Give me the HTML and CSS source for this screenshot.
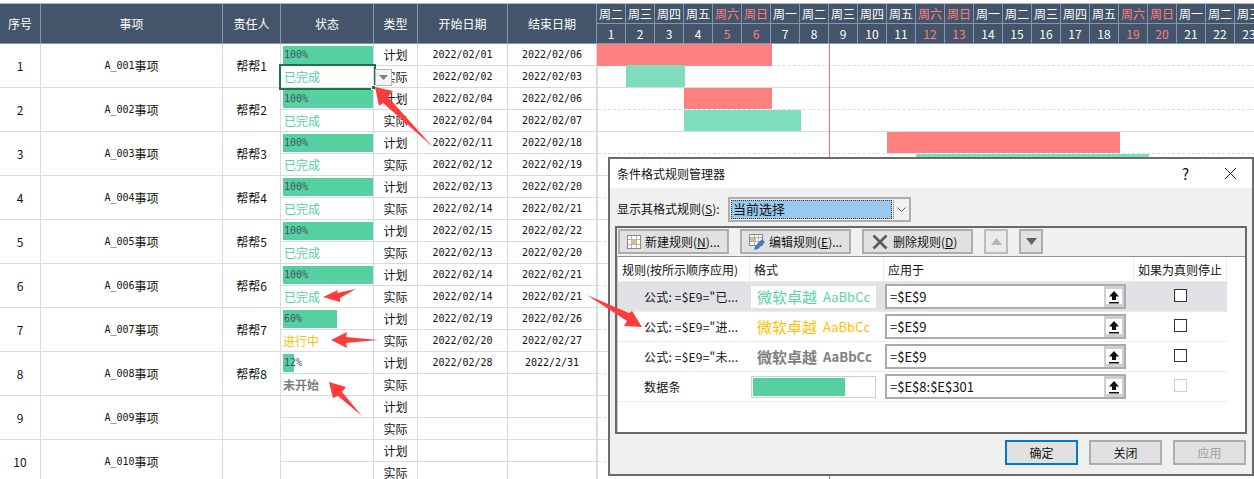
FILE: index.html
```html
<!DOCTYPE html>
<html lang="zh-CN">
<head>
<meta charset="utf-8">
<title>条件格式规则管理器</title>
<link rel="stylesheet" href="styles.css">
</head>
<body>
<div class="page">
  <div class="sheet">
    <div class="table">
      <div class="th">序号</div><div class="th">事项</div><div class="th">责任人</div><div class="th">状态</div><div class="th">类型</div><div class="th">开始日期</div><div class="th">结束日期</div>

      <div class="td tall">1</div><div class="td tall"><span class="lat">A_001</span>事项</div><div class="td tall">帮帮1</div>
      <div class="td st"><div class="bar full"><span class="lat">100%</span></div></div><div class="td">计划</div><div class="td lat">2022/02/01</div><div class="td lat">2022/02/06</div>
      <div class="td st done sel">已完成<span class="drop"><svg width="9" height="5" viewBox="0 0 9 5"><path d="M0 0h9L4.500 5z" fill="#7f7f7f"/></svg></span><span class="handle"></span></div><div class="td">实际</div><div class="td lat">2022/02/02</div><div class="td lat">2022/02/03</div>

      <div class="td tall">2</div><div class="td tall"><span class="lat">A_002</span>事项</div><div class="td tall">帮帮2</div>
      <div class="td st"><div class="bar full"><span class="lat">100%</span></div></div><div class="td">计划</div><div class="td lat">2022/02/04</div><div class="td lat">2022/02/06</div>
      <div class="td st done">已完成</div><div class="td">实际</div><div class="td lat">2022/02/04</div><div class="td lat">2022/02/07</div>

      <div class="td tall">3</div><div class="td tall"><span class="lat">A_003</span>事项</div><div class="td tall">帮帮3</div>
      <div class="td st"><div class="bar full"><span class="lat">100%</span></div></div><div class="td">计划</div><div class="td lat">2022/02/11</div><div class="td lat">2022/02/18</div>
      <div class="td st done">已完成</div><div class="td">实际</div><div class="td lat">2022/02/12</div><div class="td lat">2022/02/19</div>

      <div class="td tall">4</div><div class="td tall"><span class="lat">A_004</span>事项</div><div class="td tall">帮帮4</div>
      <div class="td st"><div class="bar full"><span class="lat">100%</span></div></div><div class="td">计划</div><div class="td lat">2022/02/13</div><div class="td lat">2022/02/20</div>
      <div class="td st done">已完成</div><div class="td">实际</div><div class="td lat">2022/02/14</div><div class="td lat">2022/02/21</div>

      <div class="td tall">5</div><div class="td tall"><span class="lat">A_005</span>事项</div><div class="td tall">帮帮5</div>
      <div class="td st"><div class="bar full"><span class="lat">100%</span></div></div><div class="td">计划</div><div class="td lat">2022/02/15</div><div class="td lat">2022/02/22</div>
      <div class="td st done">已完成</div><div class="td">实际</div><div class="td lat">2022/02/13</div><div class="td lat">2022/02/20</div>

      <div class="td tall">6</div><div class="td tall"><span class="lat">A_006</span>事项</div><div class="td tall">帮帮6</div>
      <div class="td st"><div class="bar full"><span class="lat">100%</span></div></div><div class="td">计划</div><div class="td lat">2022/02/14</div><div class="td lat">2022/02/21</div>
      <div class="td st done">已完成</div><div class="td">实际</div><div class="td lat">2022/02/14</div><div class="td lat">2022/02/21</div>

      <div class="td tall">7</div><div class="td tall"><span class="lat">A_007</span>事项</div><div class="td tall">帮帮7</div>
      <div class="td st"><div class="bar" style="width:54px"><span class="lat">60%</span></div></div><div class="td">计划</div><div class="td lat">2022/02/19</div><div class="td lat">2022/02/26</div>
      <div class="td st doing">进行中</div><div class="td">实际</div><div class="td lat">2022/02/20</div><div class="td lat">2022/02/27</div>

      <div class="td tall">8</div><div class="td tall"><span class="lat">A_008</span>事项</div><div class="td tall">帮帮8</div>
      <div class="td st"><div class="bar" style="width:11px"><span class="lat">12%</span></div></div><div class="td">计划</div><div class="td lat">2022/02/28</div><div class="td lat">2022/2/31</div>
      <div class="td st todo">未开始</div><div class="td">实际</div><div class="td"></div><div class="td"></div>

      <div class="td tall">9</div><div class="td tall"><span class="lat">A_009</span>事项</div><div class="td tall"></div>
      <div class="td st"></div><div class="td">计划</div><div class="td"></div><div class="td"></div>
      <div class="td st"></div><div class="td">实际</div><div class="td"></div><div class="td"></div>

      <div class="td tall">10</div><div class="td tall"><span class="lat">A_010</span>事项</div><div class="td tall"></div>
      <div class="td st"></div><div class="td">计划</div><div class="td"></div><div class="td"></div>
      <div class="td st"></div><div class="td">实际</div><div class="td"></div><div class="td"></div>
    </div>

    <div class="gantt">
      <div class="ghead">
        <div class="wk">周二</div><div class="wk">周三</div><div class="wk">周四</div><div class="wk">周五</div><div class="wk off">周六</div><div class="wk off">周日</div><div class="wk">周一</div><div class="wk">周二</div><div class="wk">周三</div><div class="wk">周四</div><div class="wk">周五</div><div class="wk off">周六</div><div class="wk off">周日</div><div class="wk">周一</div><div class="wk">周二</div><div class="wk">周三</div><div class="wk">周四</div><div class="wk">周五</div><div class="wk off">周六</div><div class="wk off">周日</div><div class="wk">周一</div><div class="wk">周二</div><div class="wk">周三</div>
        <div class="dy">1</div><div class="dy">2</div><div class="dy">3</div><div class="dy">4</div><div class="dy off">5</div><div class="dy off">6</div><div class="dy">7</div><div class="dy">8</div><div class="dy">9</div><div class="dy">10</div><div class="dy">11</div><div class="dy off">12</div><div class="dy off">13</div><div class="dy">14</div><div class="dy">15</div><div class="dy">16</div><div class="dy">17</div><div class="dy">18</div><div class="dy off">19</div><div class="dy off">20</div><div class="dy">21</div><div class="dy">22</div><div class="dy">23</div>
      </div>
      <div class="gbody">
        <div class="gr dash r1"></div><div class="gr r2"></div><div class="gr dash r3"></div><div class="gr r4"></div><div class="gr dash r5"></div><div class="gr r6"></div><div class="gr dash r7"></div><div class="gr r8"></div><div class="gr dash r9"></div><div class="gr r10"></div><div class="gr dash r11"></div><div class="gr r12"></div><div class="gr dash r13"></div><div class="gr r14"></div><div class="gr dash r15"></div><div class="gr r16"></div><div class="gr dash r17"></div><div class="gr r18"></div><div class="gr dash r19"></div><div class="gr r20"></div>
        <div class="today"></div>
        <div class="gbar plan flush" style="grid-area:1/1/2/7"></div>
        <div class="gbar real over" style="grid-area:2/2/3/4"></div>
        <div class="gbar plan" style="grid-area:3/4/4/7"></div>
        <div class="gbar real" style="grid-area:4/4/5/8"></div>
        <div class="gbar plan" style="grid-area:5/11/6/19"></div>
        <div class="gbar real" style="grid-area:6/12/7/20"></div>
      </div>
    </div>
  </div>

  <div class="dialog">
    <div class="dtitle">
      <span class="dname">条件格式规则管理器</span>
      <span class="dhelp">?</span>
      <svg class="dclose" width="13" height="13" viewBox="0 0 13 13"><path d="M1 1l11 11M12 1L1 12" stroke="#222" stroke-width="1" fill="none"/></svg>
    </div>
    <div class="filter">
      <span class="flabel">显示其格式规则(<u>S</u>):</span>
      <div class="select">
        <span class="selval">当前选择</span>
        <span class="selbtn"><svg width="9" height="5" viewBox="0 0 9 5"><path d="M.5.500l4 4 4-4" stroke="#555" fill="none"/></svg></span>
      </div>
    </div>
    <div class="rulebox">
      <div class="tools">
        <div class="tbtn"><svg width="16" height="16" viewBox="0 0 16 16"><rect x="1.500" y="1.500" width="13" height="13" fill="#fff" stroke="#8a8a8a"/><rect x="5" y="5" width="6" height="6" fill="#e8b778"/><path d="M5.500 2v12M10.500 2v12M2 5.500h12M2 10.500h12" stroke="#b5b5b5" fill="none"/></svg><span>新建规则(<u>N</u>)...</span></div>
        <div class="tbtn"><svg width="18" height="18" viewBox="0 0 18 18"><rect x="1.500" y="1.500" width="13" height="11" fill="#fff" stroke="#8a8a8a"/><rect x="2" y="5" width="6" height="4" fill="#e8b778"/><path d="M6.500 2v10M10.500 2v10M2 4.500h12M2 8.500h12" stroke="#b5b5b5" fill="none"/><path d="M6 17l1-4 7-7 3 3-7 7z" fill="#3f7fc0"/></svg><span>编辑规则(<u>E</u>)...</span></div>
        <div class="tbtn del"><svg width="16" height="16" viewBox="0 0 16 16"><path d="M1.500 1.500l13 13M14.500 1.500l-13 13" stroke="#5a5a5a" stroke-width="2.600" fill="none"/></svg><span>删除规则(<u>D</u>)</span></div>
        <div class="tbtn arrow off"><svg width="11" height="7" viewBox="0 0 11 7"><path d="M0 7h11L5.500 0z" fill="#b4b4b4"/></svg></div>
        <div class="tbtn arrow"><svg width="11" height="7" viewBox="0 0 11 7"><path d="M0 0h11L5.500 7z" fill="#606060"/></svg></div>
      </div>
      <div class="list">
        <div class="rhead"><span>规则(按所示顺序应用)</span><span>格式</span><span>应用于</span><span>如果为真则停止</span></div>

        <div class="rule cur">
          <span class="rname">公式: =$E9="已...</span>
          <span class="fmt green"><b>微软卓越</b><i>AaBbCc</i></span>
          <span class="range"><span class="rtext">=$E$9</span><span class="rbtn"><svg width="12" height="14" viewBox="0 0 12 14"><path d="M6 1L1 6.500h3V10h4V6.500h3zM1 12h10v1.500H1z" fill="#111"/></svg></span></span>
          <span class="chk"><span class="box"></span></span>
        </div>
        <div class="rule">
          <span class="rname">公式: =$E9="进...</span>
          <span class="fmt yellow"><b>微软卓越</b><i>AaBbCc</i></span>
          <span class="range"><span class="rtext">=$E$9</span><span class="rbtn"><svg width="12" height="14" viewBox="0 0 12 14"><path d="M6 1L1 6.500h3V10h4V6.500h3zM1 12h10v1.500H1z" fill="#111"/></svg></span></span>
          <span class="chk"><span class="box"></span></span>
        </div>
        <div class="rule">
          <span class="rname">公式: =$E9="未...</span>
          <span class="fmt gray"><b>微软卓越</b><i>AaBbCc</i></span>
          <span class="range"><span class="rtext">=$E$9</span><span class="rbtn"><svg width="12" height="14" viewBox="0 0 12 14"><path d="M6 1L1 6.500h3V10h4V6.500h3zM1 12h10v1.500H1z" fill="#111"/></svg></span></span>
          <span class="chk"><span class="box"></span></span>
        </div>
        <div class="rule">
          <span class="rname">数据条</span>
          <span class="fmt databar"><span class="dfill"></span></span>
          <span class="range"><span class="rtext">=$E$8:$E$301</span><span class="rbtn"><svg width="12" height="14" viewBox="0 0 12 14"><path d="M6 1L1 6.500h3V10h4V6.500h3zM1 12h10v1.500H1z" fill="#111"/></svg></span></span>
          <span class="chk"><span class="box dim"></span></span>
        </div>
      </div>
    </div>
    <div class="foot">
      <div class="fbtn primary">确定</div>
      <div class="fbtn">关闭</div>
      <div class="fbtn dis">应用</div>
    </div>
  </div>

  <svg class="marks" width="1254" height="479" viewBox="0 0 1254 479">
    <g fill="#ff3b3b">
      <polygon points="375,87 393,91 388,97 433,147 383,103 379,106"/>
      <polygon points="323,297 338,290 337,293 356,289 340,298 340,302"/>
      <polygon points="331,340 347,332 346,337 378,340 346,343 347,348"/>
      <polygon points="329,382 346,387 342,392 362,416 338,396 333,398"/>
      <polygon points="587,295 629,313 632,311 642,327 624,326 627,321"/>
    </g>
  </svg>
</div>
</body>
</html>
```
FILE: styles.css
```css
* { box-sizing: border-box; }
html, body { margin: 0; padding: 0; background: #fff; }
body {
  font-family: "Noto Sans CJK SC", "Liberation Sans", sans-serif;
  font-size: 12px;
  color: #111;
}
.page { position: relative; width: 1254px; height: 479px; overflow: hidden; }
.sheet { display: flex; padding-top: 3px; height: 479px; }

/* left table */
.table {
  display: grid;
  grid-template-columns: 41px 182px 58px 93px 44px 90px 89px;
  grid-template-rows: 41px;
  grid-auto-rows: 22px;
  width: 597px;
  flex: none;
  align-content: start;
}
.th {
  display: flex; align-items: center; justify-content: center;
  background: #44546a; color: #fff;
  border-top: 1px solid #adb9ca;
  border-right: 1px solid #8497b0;
  border-bottom: 1px solid #8497b0;
}
.td {
  display: flex; align-items: center; justify-content: center;
  border-right: 1px solid #d6dce4;
  border-bottom: 1px solid #d6dce4;
  white-space: nowrap;
  line-height: 1;
}
.tall { grid-row: span 2; }
.lat { font-family: "DejaVu Sans Mono", "Liberation Mono", monospace; font-size: 10px; }
.st { justify-content: flex-start; padding-left: 2px; position: relative; }
.bar {
  height: 18px; background: #55d0a0; color: #44546a;
  display: flex; align-items: center; padding-left: 1px;
  white-space: nowrap;
}
.bar.full { width: 90px; }
.done { color: #55d0a0; padding-left: 3px; }
.doing { color: #ffc000; padding-left: 2px; }
.todo { color: #7f7f7f; font-weight: 700; padding-left: 2px; }
.sel { outline: 2px solid #217346; z-index: 2; background: #fff; }
.drop {
  position: absolute; left: 94px; top: 3px;
  width: 17px; height: 17px;
  background: #f4f4f6; border: 1px solid #b3b8c4;
  display: flex; align-items: center; justify-content: center;
}
.handle { position: absolute; right: -3px; bottom: -3px; width: 5px; height: 5px; background: #217346; border: 1px solid #fff; }

/* gantt */
.gantt { flex: 1; min-width: 0; overflow: hidden; }
.ghead {
  display: grid;
  grid-template-columns: repeat(23, 29px);
  grid-template-rows: 20px 21px;
  background: #44546a;
  width: 667px;
}
.wk, .dy {
  display: flex; align-items: center; justify-content: center;
  color: #fff; white-space: nowrap;
  border-right: 1px solid #8497b0;
}
.wk { border-top: 1px solid #adb9ca; }
.dy { border-top: 1px solid #8497b0; border-bottom: 1px solid #8497b0; }
.off { color: #ff8080; }
.gbody {
  display: grid;
  grid-template-columns: repeat(23, 29px);
  grid-template-rows: repeat(20, 22px);
  width: 667px;
  border-left: 1px solid #d6dce4;
}
.gr { grid-column: 1 / -1; border-bottom: 1px solid #d6dce4; }
.gr.dash { border-bottom: 1px dashed #d6dce4; }
.r1 { grid-row: 1; } .r2 { grid-row: 2; } .r3 { grid-row: 3; } .r4 { grid-row: 4; } .r5 { grid-row: 5; }
.r6 { grid-row: 6; } .r7 { grid-row: 7; } .r8 { grid-row: 8; } .r9 { grid-row: 9; } .r10 { grid-row: 10; }
.r11 { grid-row: 11; } .r12 { grid-row: 12; } .r13 { grid-row: 13; } .r14 { grid-row: 14; } .r15 { grid-row: 15; }
.r16 { grid-row: 16; } .r17 { grid-row: 17; } .r18 { grid-row: 18; } .r19 { grid-row: 19; } .r20 { grid-row: 20; }
.today { grid-column: 9; grid-row: 1 / -1; border-left: 1px solid #ff6b6b; margin-left: -1px; z-index: 1; }
.gbar { z-index: 2; margin-left: -1px; margin-bottom: 1px; }
.gbar.flush { margin-bottom: 0; }
.gbar.over { margin-top: -1px; }
.plan { background: #ff8080; }
.real { background: #80ddbc; }

/* dialog */
.dialog {
  position: absolute; left: 608px; top: 157px;
  width: 646px; height: 319px;
  border: 2px solid #6b6b6b;
  background: #f0f0f0;
  display: flex; flex-direction: column;
  z-index: 5;
}
.dtitle {
  height: 29px; flex: none; background: #fff;
  display: flex; align-items: center; padding-left: 7px;
}
.dname { flex: 1; }
.dhelp { font-size: 15px; margin-right: 35px; }
.dclose { margin-right: 15px; }
.filter { display: flex; align-items: center; margin-top: 9px; padding-left: 7px; height: 25px; flex: none; }
.flabel { width: 111px; flex: none; white-space: nowrap; margin-top: -3px; }
.select {
  width: 183px; height: 25px;
  border: 2px solid #adadad; background: #f0f0f0;
  display: flex; padding: 1px;
}
.selval {
  width: 161px; background: #99c9ee; border: 1px dotted #333;
  display: flex; align-items: center; padding: 0 0 3px 1px; font-size: 13px;
}
.selbtn {
  flex: 1; display: flex; align-items: center; justify-content: center;
  margin-left: 1px; border-left: 1px solid #adadad;
}
.rulebox {
  margin: 4px 0 0 5px; width: 632px; height: 208px; flex: none;
  border: 2px solid #696969;
  display: flex; flex-direction: column;
}
.tools { height: 28px; flex: none; display: flex; gap: 11px; padding: 1px 0 0 1px; }
.tbtn {
  width: 111px; height: 25px; flex: none;
  background: #e1e1e1; border: 2px solid #adadad;
  display: flex; align-items: center; gap: 3px; padding-left: 6px;
  white-space: nowrap;
}
.tbtn.del { gap: 5px; padding-left: 8px; }
.tbtn.arrow { width: 24px; padding: 0; justify-content: center; }
.tbtn.arrow.off { background: #ebebeb; border-color: #bdbdbd; }
.list { flex: 1; background: #fff; border-top: 1px solid #8f8f8f; border-left: 1px solid #c9c9c9; }
.rhead, .rule {
  display: grid;
  grid-template-columns: 132px 134px 250px 93px;
  width: 609px;
  border-bottom: 1px solid #ececec;
}
.rhead { height: 25px; }
.rhead span {
  display: flex; align-items: center; padding-left: 4px;
  border-right: 1px solid #ececec; white-space: nowrap;
}
.rule { height: 30px; align-items: center; }
.rule.cur { background: #e1e1e6; }
.rname { padding-left: 26px; white-space: nowrap; letter-spacing: .2px; }
.fmt {
  margin-left: 1px; width: 125px; height: 22px;
  display: flex; align-items: center; padding-left: 6px; background: #fff;
  white-space: nowrap;
}
.fmt b { font-size: 15px; font-weight: 400; }
.fmt i { font-style: normal; font-size: 13px; margin-left: 6px; }
.green { color: #57d3a6; }
.yellow { color: #ffc000; }
.gray { color: #808080; }
.gray b, .gray i { font-weight: 700; }
.databar { border: 1px solid #cfcfcf; padding: 1px; }
.dfill { width: 92px; height: 18px; background: #55d0a0; }
.range {
  margin-left: 1px; width: 241px; height: 25px;
  border: 2px solid #ababab; background: #fff;
  display: flex; align-items: center;
}
.rtext { flex: 1; padding-left: 3px; font-size: 13px; }
.rbtn {
  width: 20px; height: 21px; background: #fff;
  border: 3px solid #cfcfcf; border-right-width: 2px; border-left-width: 2px;
  display: flex; align-items: center; justify-content: center;
}
.chk { display: flex; justify-content: center; }
.box { width: 13px; height: 13px; border: 1px solid #333; background: #fff; margin-top: -3px; }
.box.dim { border-color: #cfcfcf; }
.foot { display: flex; justify-content: flex-end; gap: 11px; margin-top: 6px; padding-right: 6px; }
.fbtn {
  width: 73px; height: 25px;
  background: #e1e1e1; border: 2px solid #adadad;
  display: flex; align-items: center; justify-content: center;
}
.fbtn.primary { border-color: #0078d7; }
.fbtn.dis { color: #a0a0a0; }

/* annotation arrows */
.marks { position: absolute; left: 0; top: 0; z-index: 8; }
```
